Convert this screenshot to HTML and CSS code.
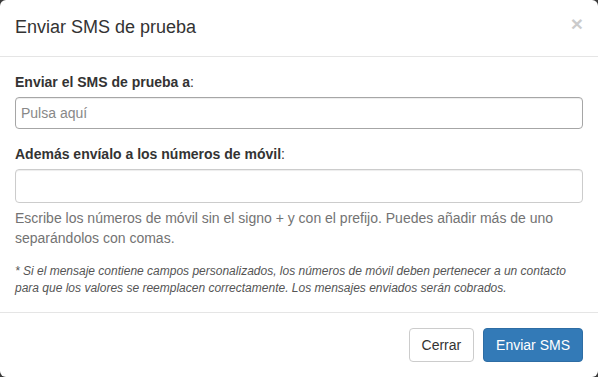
FILE: index.html
```html
<!DOCTYPE html>
<html lang="es">
<head>
  <meta charset="UTF-8" />
  <meta name="viewport" content="width=device-width, initial-scale=1.0"/>
  <title>Enviar SMS de prueba</title>
  <link rel="stylesheet" href="styles.css">
</head>
<body>

<div class="modal">
  <div class="modal-header">
    <button class="close" type="button">&times;</button>
    <h4 class="modal-title">Enviar SMS de prueba</h4>
  </div>

  <div class="modal-body">
    <div class="form-group">
      <label for="to"><b>Enviar el SMS de prueba a</b>:</label>
      <input type="text" id="to" class="form-control picker" placeholder="Pulsa aquí">
    </div>

    <div class="form-group">
      <label for="extra"><b>Además envíalo a los números de móvil</b>:</label>
      <input type="text" id="extra" class="form-control">
      <p class="help-block">Escribe los números de móvil sin el signo + y con el prefijo. Puedes añadir más de uno separándolos con comas.</p>
    </div>

    <p class="note">* Si el mensaje contiene campos personalizados, los números de móvil deben pertenecer a un contacto para que los valores se reemplacen correctamente. Los mensajes enviados serán cobrados.</p>
  </div>

  <div class="modal-footer">
    <button class="btn btn-default" type="button">Cerrar</button>
    <button class="btn btn-primary" type="button">Enviar SMS</button>
  </div>
</div>

</body>
</html>
```

FILE: styles.css
```css
* {
  box-sizing: border-box;
}

html, body {
  margin: 0;
  padding: 0;
  background: #3a3a3a;
  height: 100%;
}

body {
  font-family: 'Liberation Sans', Arial, Helvetica, sans-serif;
  font-size: 14px;
  line-height: 1.42857143;
  color: #333;
}

.modal {
  width: 598px;
  height: 377px;
  background: #fff;
  border-radius: 6px;
  overflow: hidden;
}

.modal-header {
  padding: 15px;
  border-bottom: 1px solid #e5e5e5;
}

.modal-title {
  margin: 0;
  font-size: 18px;
  font-weight: 500;
  line-height: 1.42857143;
  color: #333;
}

.close {
  float: right;
  margin-top: -2px;
  padding: 0;
  border: 0;
  background: transparent;
  font-family: 'Liberation Sans', Arial, sans-serif;
  font-size: 21px;
  font-weight: bold;
  line-height: 1;
  color: #000;
  opacity: 0.2;
  cursor: pointer;
}

.modal-body {
  padding: 15px;
}

.form-group {
  margin-bottom: 15px;
}

label {
  display: inline-block;
  margin-bottom: 5px;
  font-weight: normal;
}

.form-control {
  display: block;
  width: 100%;
  height: 34px;
  padding: 6px 12px;
  font-family: inherit;
  font-size: 14px;
  line-height: 1.42857143;
  color: #555;
  background: #fff;
  border: 1px solid #ccc;
  border-radius: 4px;
  box-shadow: inset 0 1px 1px rgba(0,0,0,0.075);
}

.form-control::placeholder {
  color: #888;
}

.form-control.picker {
  height: 32px;
  padding: 5px 5px;
  border-color: #a6a6a6;
}

.help-block {
  display: block;
  margin: 5px 0 10px;
  color: #737373;
}

.note {
  margin: 0;
  font-size: 12px;
  font-style: italic;
  color: #555;
}

.modal-footer {
  padding: 15px;
  text-align: right;
  border-top: 1px solid #e5e5e5;
}

.btn {
  display: inline-block;
  padding: 6px 12px;
  font-family: inherit;
  font-size: 14px;
  line-height: 1.42857143;
  border: 1px solid transparent;
  border-radius: 4px;
  cursor: pointer;
}

.btn + .btn {
  margin-left: 5px;
}

.btn-default {
  color: #333;
  background: #fff;
  border-color: #ccc;
}

.btn-primary {
  color: #fff;
  background: #337ab7;
  border-color: #2e6da4;
}
```
